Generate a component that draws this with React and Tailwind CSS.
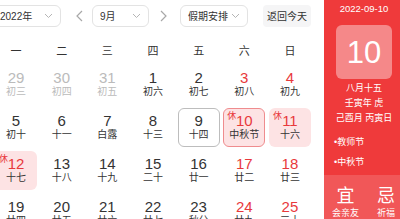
import React from 'react';

const weekdays = ['一', '二', '三', '四', '五', '六', '日'];

const days = [
  { d: 29, l: '初三', other: true }, { d: 30, l: '初四', other: true }, { d: 31, l: '初五', other: true },
  { d: 1, l: '初六' }, { d: 2, l: '初七' }, { d: 3, l: '初八' }, { d: 4, l: '初九' },
  { d: 5, l: '初十' }, { d: 6, l: '十一' }, { d: 7, l: '白露' }, { d: 8, l: '十三' },
  { d: 9, l: '十四', today: true }, { d: 10, l: '中秋节', rest: true, selected: true }, { d: 11, l: '十六', rest: true },
  { d: 12, l: '十七', rest: true }, { d: 13, l: '十八' }, { d: 14, l: '十九' }, { d: 15, l: '二十' },
  { d: 16, l: '廿一' }, { d: 17, l: '廿二' }, { d: 18, l: '廿三' },
  { d: 19, l: '廿四' }, { d: 20, l: '廿五' }, { d: 21, l: '廿六' }, { d: 22, l: '廿七' },
  { d: 23, l: '秋分' }, { d: 24, l: '廿九' }, { d: 25, l: '三十' },
];

const Chevron = () => (
  <svg width="9" height="6" viewBox="0 0 9 6" fill="none" stroke="#b5b5b5" strokeWidth="1">
    <path d="M1 1l3.5 3.5L8 1" />
  </svg>
);

const Select = ({ label, className }) => (
  <div className={`h-[22px] flex items-center justify-between pl-[7px] pr-[7px] border border-[#e3e3e3] rounded-[6px] text-[10px] text-[#333] whitespace-nowrap ${className}`}>
    <span>{label}</span>
    <Chevron />
  </div>
);

const Arrow = ({ dir, className }) => (
  <div className={`w-[12px] flex justify-center ${className}`}>
    <svg width="7" height="12" viewBox="0 0 7 12" fill="none" stroke="#a8a8a8" strokeWidth="1.2">
      {dir === 'left' ? <path d="M6 1L1 6L6 11" /> : <path d="M1 1L6 6L1 11" />}
    </svg>
  </div>
);

const DayCell = ({ day, col }) => {
  const weekend = col >= 5;
  let numColor = 'text-[#333]';
  if (day.other) numColor = 'text-[#bbbbbb]';
  else if (weekend || day.rest) numColor = 'text-[#e8393c]';
  const lunarColor = day.other ? 'text-[#bbbbbb]' : 'text-[#333]';
  let box = 'border border-transparent';
  if (day.selected) box = 'border border-[#ef8c8e] bg-[#fde3e4]';
  else if (day.rest) box = 'border border-transparent bg-[#fde3e4]';
  else if (day.today) box = 'border border-[#bdbdbd] bg-white';
  return (
    <div className={`relative h-[39px] rounded-[6px] flex flex-col items-center pt-[4px] ${box}`}>
      {day.rest && <span className="absolute left-[3px] top-[2px] text-[9px] leading-[10px] text-[#e8393c]">休</span>}
      <span className={`text-[15px] leading-[16px] ${numColor}`}>{day.d}</span>
      <span className={`text-[10px] leading-[12px] whitespace-nowrap ${lunarColor}`}>{day.l}</span>
    </div>
  );
};

export default function App() {
  return (
    <div className="w-[400px] h-[219px] overflow-hidden bg-white flex" style={{ fontFamily: '"Liberation Sans", "Noto Sans CJK SC", sans-serif' }}>
      <div className="ml-[-8px] w-[332px] shrink-0 pt-[5px]">
        <div className="flex items-center">
          <Select label="2022年" className="w-[69px]" />
          <Arrow dir="left" className="ml-[12px]" />
          <Select label="9月" className="w-[57px] ml-[7px]" />
          <Arrow dir="right" className="ml-[8px]" />
          <Select label="假期安排" className="w-[68px] ml-[11px]" />
          <div className="ml-[15px] w-[48px] h-[22px] flex items-center justify-center rounded-[4px] bg-[#f5f5f6] text-[10px] text-[#333]">返回今天</div>
        </div>
        <div className="pl-[3px]">
          <div className="mt-[14px] grid grid-cols-[repeat(7,42px)] gap-x-[3.67px] h-[20px] items-center">
            {weekdays.map((w) => (
              <div key={w} className="text-center text-[11px] text-[#333]">{w}</div>
            ))}
          </div>
          <div className="mt-[4px] grid grid-cols-[repeat(7,42px)] gap-x-[3.67px] gap-y-[4px]">
            {days.map((day, i) => (
              <DayCell key={i} day={day} col={i % 7} />
            ))}
          </div>
        </div>
      </div>
      <div className="w-[80px] shrink-0 bg-[#ef3a3b] flex flex-col text-white">
        <div className="pt-[3px] text-[9.5px] leading-[12px] text-center">2022-09-10</div>
        <div className="mt-[10px] mx-auto w-[56px] h-[58px] rounded-[6px] bg-white/40 flex items-center justify-center text-[31px] leading-none">10</div>
        <div className="mt-[2px] text-center text-[9px] leading-[15px]">
          <div>八月十五</div>
          <div>壬寅年 虎</div>
          <div>己酉月 丙寅日</div>
        </div>
        <div className="mt-[6px] pl-[10px] text-[9px] leading-[20px]">
          <div>•教师节</div>
          <div>•中秋节</div>
        </div>
        <div className="mt-[3px] flex-1 bg-white/15 flex pl-[8px] pt-[11px] gap-[18px]">
          <div className="flex flex-col items-center">
            <span className="text-[18px] leading-[21px]">宜</span>
            <span className="text-[9px] leading-[12px] whitespace-nowrap">会亲友</span>
          </div>
          <div className="flex flex-col items-center">
            <span className="text-[18px] leading-[21px]">忌</span>
            <span className="text-[9px] leading-[12px] whitespace-nowrap">祈福</span>
          </div>
        </div>
      </div>
    </div>
  );
}
